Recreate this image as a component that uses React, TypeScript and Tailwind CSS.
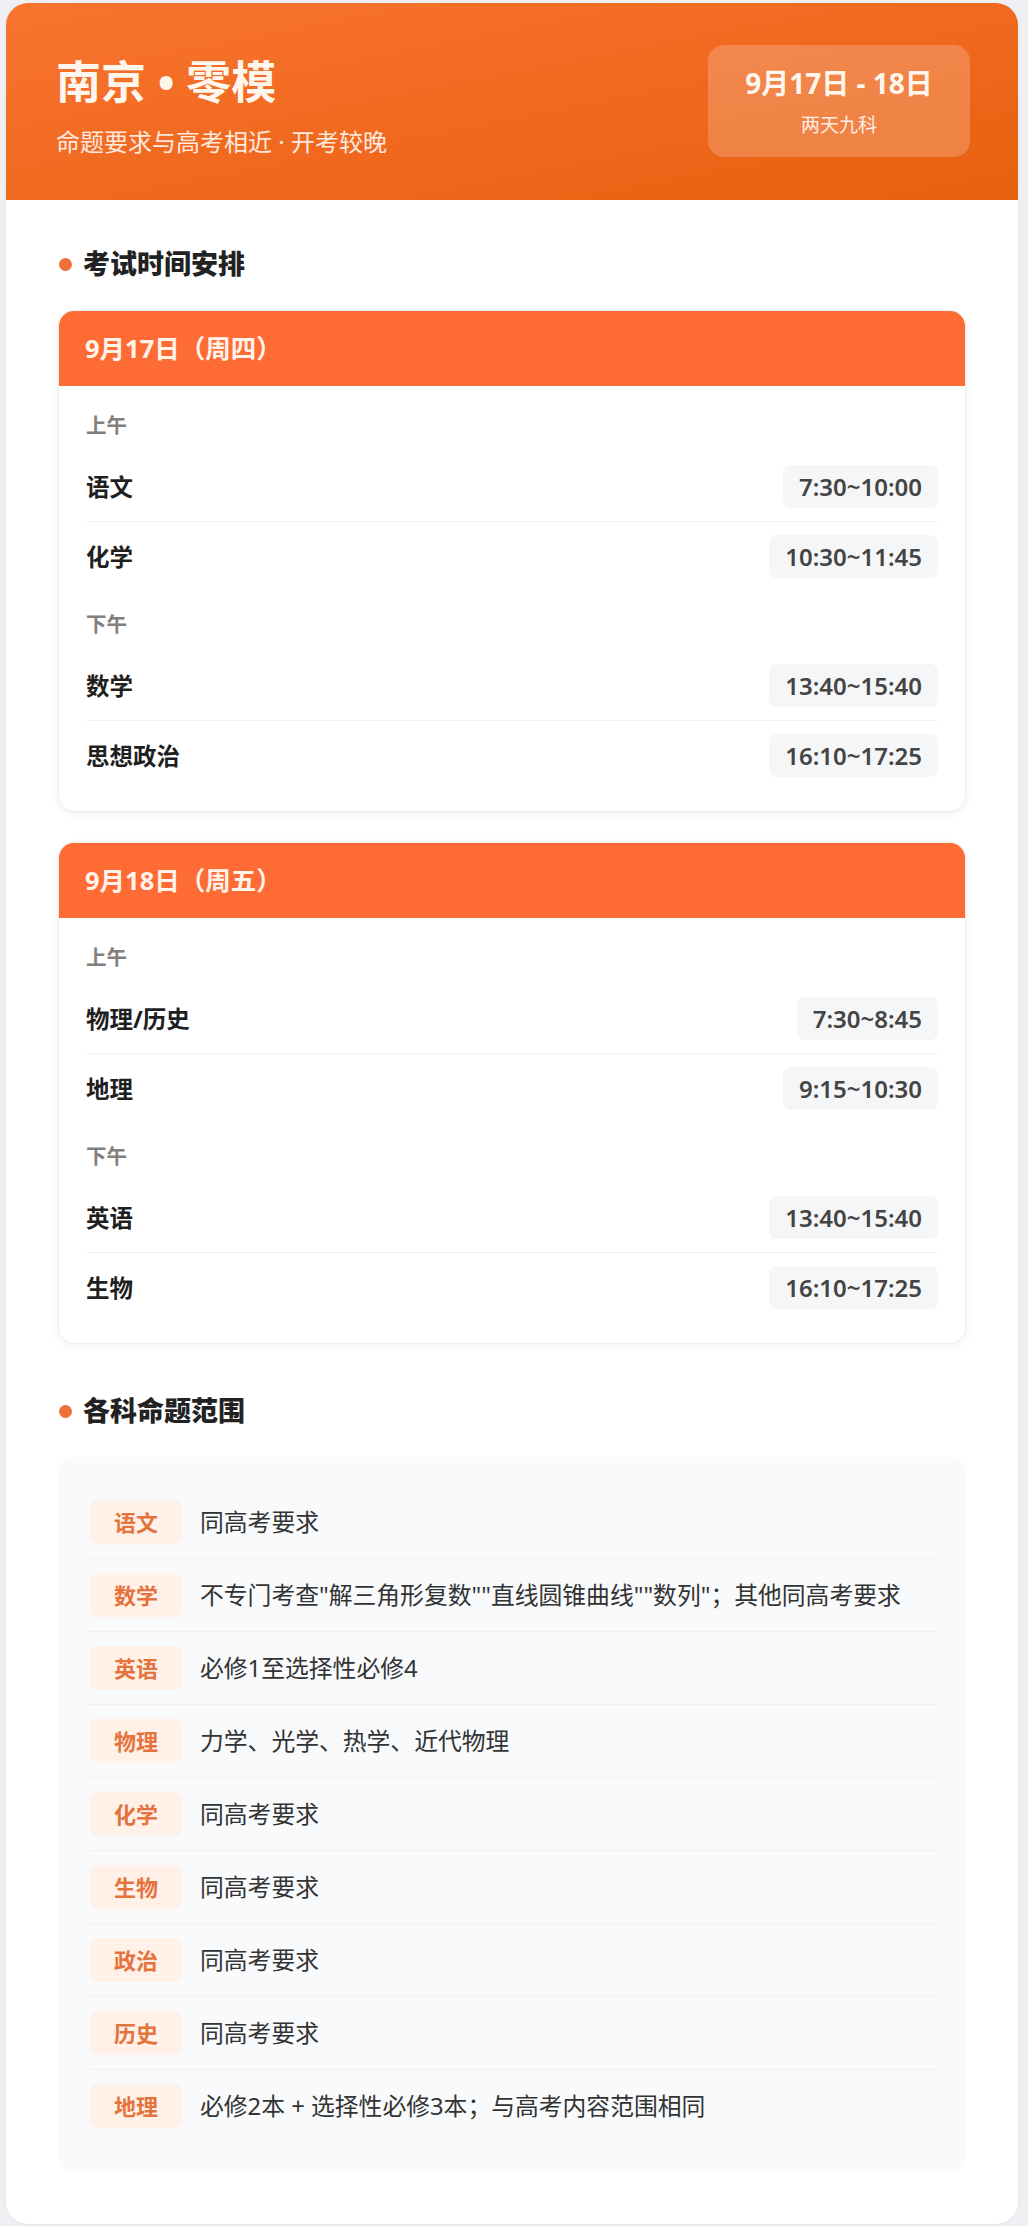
const font = "font-['Noto_Sans','Noto_Sans_CJK_SC',sans-serif]";

type Exam = { subject: string; time: string };
type Day = { title: string; morning: Exam[]; afternoon: Exam[] };

const days: Day[] = [
  {
    title: "9月17日（周四）",
    morning: [
      { subject: "语文", time: "7:30~10:00" },
      { subject: "化学", time: "10:30~11:45" },
    ],
    afternoon: [
      { subject: "数学", time: "13:40~15:40" },
      { subject: "思想政治", time: "16:10~17:25" },
    ],
  },
  {
    title: "9月18日（周五）",
    morning: [
      { subject: "物理/历史", time: "7:30~8:45" },
      { subject: "地理", time: "9:15~10:30" },
    ],
    afternoon: [
      { subject: "英语", time: "13:40~15:40" },
      { subject: "生物", time: "16:10~17:25" },
    ],
  },
];

const scopes = [
  { tag: "语文", text: "同高考要求" },
  { tag: "数学", text: "不专门考查\"解三角形复数\"\"直线圆锥曲线\"\"数列\"；其他同高考要求" },
  { tag: "英语", text: "必修1至选择性必修4" },
  { tag: "物理", text: "力学、光学、热学、近代物理" },
  { tag: "化学", text: "同高考要求" },
  { tag: "生物", text: "同高考要求" },
  { tag: "政治", text: "同高考要求" },
  { tag: "历史", text: "同高考要求" },
  { tag: "地理", text: "必修2本 + 选择性必修3本；与高考内容范围相同" },
];

function SectionTitle({ children }: { children: string }) {
  return (
    <div className="mb-[28px] flex h-[36px] items-center">
      <span className="ml-[1px] h-[13px] w-[13px] rounded-full bg-[#f0703a]" />
      <h2 className="ml-[11px] text-[27px] font-extrabold leading-[36px] text-[#222]">
        {children}
      </h2>
    </div>
  );
}

function ExamRows({ label, rows, first }: { label: string; rows: Exam[]; first?: boolean }) {
  return (
    <div className={first ? "" : "mt-[20px]"}>
      <p className="mb-[14px] text-[20.5px] font-semibold leading-[26px] text-[#808080]">{label}</p>
      {rows.map((r, i) => (
        <div
          key={r.subject}
          className={`flex items-center justify-between py-[13px] ${
            i < rows.length - 1 ? "border-b border-[#f0f1f3]" : ""
          }`}
        >
          <span className="text-[23.5px] font-bold leading-[30px] text-[#1f1f1f]">{r.subject}</span>
          <span className="flex h-[43px] items-center rounded-lg bg-[#f5f6f8] px-[16px] text-[24px] font-semibold text-[#444]">
            {r.time}
          </span>
        </div>
      ))}
    </div>
  );
}

function DayCard({ day }: { day: Day }) {
  return (
    <div className="overflow-hidden rounded-2xl border border-[#eeeeee] bg-white shadow-[0_2px_8px_rgba(0,0,0,0.06)]">
      <div className="flex h-[75px] items-center bg-[#ff6b35] px-[26px]">
        <span className="text-[25.5px] font-bold text-[#fff3ea]">{day.title}</span>
      </div>
      <div className="px-[27px] pb-[21px] pt-[26px]">
        <ExamRows label="上午" rows={day.morning} first />
        <ExamRows label="下午" rows={day.afternoon} />
      </div>
    </div>
  );
}

export default function App() {
  return (
    <div className={`min-h-[2226px] bg-[#eef0f3] pb-[4px] pl-[6px] pr-[10px] pt-[3px] ${font}`}>
      <div className="overflow-hidden rounded-[22px] bg-white shadow-[0_1px_4px_rgba(0,0,0,0.05)]">
        <header className="flex h-[197px] items-start justify-between bg-linear-to-br from-[#f8742f] via-[#f0691f] to-[#e8610e] pl-[50px] pr-[48px] pt-[42px]">
          <div className="mt-[11px]">
            <h1 className="text-[45px] font-bold leading-[52px] text-[#fff6ee]">南京 • 零模</h1>
            <p className="mt-[18px] text-[24px] leading-[32px] text-white/85">
              命题要求与高考相近 · 开考较晚
            </p>
          </div>
          <div className="flex h-[112px] w-[262px] flex-col items-center justify-center rounded-2xl bg-white/20">
            <span className="text-[28px] font-bold leading-[34px] text-[#fff6ee]">9月17日 - 18日</span>
            <span className="mt-[13px] text-[19px] leading-[24px] text-white/85">两天九科</span>
          </div>
        </header>

        <main className="px-[52px] pb-[52px] pt-[46px]">
          <SectionTitle>考试时间安排</SectionTitle>
          <div className="flex flex-col gap-[30px]">
            {days.map((d) => (
              <DayCard key={d.title} day={d} />
            ))}
          </div>

          <div className="mt-[49px]">
            <SectionTitle>各科命题范围</SectionTitle>
          </div>
          <div className="rounded-2xl bg-[#f8fafc] pb-[30px] pl-[32px] pr-[29px] pt-[29px]">
            {scopes.map((s, i) => (
              <div
                key={s.tag}
                className={`flex items-center py-[14px] ${
                  i < scopes.length - 1 ? "border-b border-[#eef0f3]" : ""
                }`}
              >
                <span className="flex h-[44px] w-[92px] shrink-0 items-center justify-center rounded-lg bg-[#fff1e8] text-[22px] font-bold text-[#e5733d]">
                  {s.tag}
                </span>
                <span className="ml-[18px] text-[23.8px] leading-[32px] text-[#333]">{s.text}</span>
              </div>
            ))}
          </div>
        </main>
      </div>
    </div>
  );
}
